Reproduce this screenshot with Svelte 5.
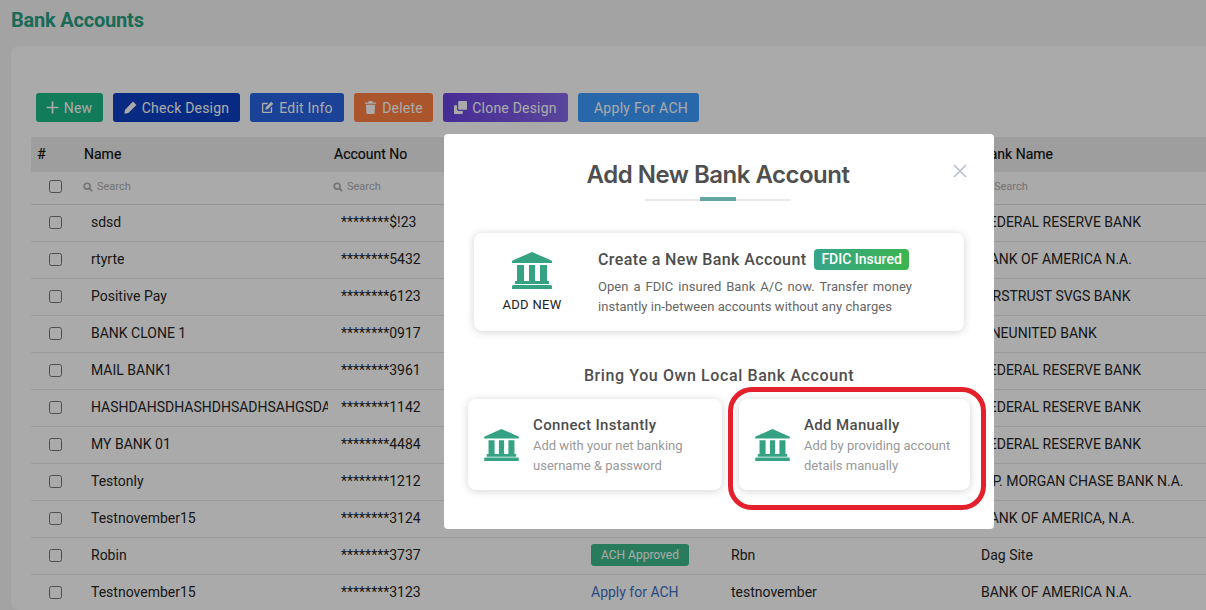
<script>
  const rows = [
    ['sdsd', '********$!23', '', '', 'FEDERAL RESERVE BANK'],
    ['rtyrte', '********5432', '', '', 'BANK OF AMERICA N.A.'],
    ['Positive Pay', '********6123', '', '', 'FIRSTRUST SVGS BANK'],
    ['BANK CLONE 1', '********0917', '', '', 'ONEUNITED BANK'],
    ['MAIL BANK1', '********3961', '', '', 'FEDERAL RESERVE BANK'],
    ['HASHDAHSDHASHDHSADHSAHGSDAHGSD', '********1142', '', '', 'FEDERAL RESERVE BANK'],
    ['MY BANK 01', '********4484', '', '', 'FEDERAL RESERVE BANK'],
    ['Testonly', '********1212', '', '', 'J.P. MORGAN CHASE BANK N.A.'],
    ['Testnovember15', '********3124', '', '', 'BANK OF AMERICA, N.A.'],
    ['Robin', '********3737', 'approved', 'Rbn', 'Dag Site'],
    ['Testnovember15', '********3123', 'apply', 'testnovember', 'BANK OF AMERICA N.A.']
  ];
</script>

{#snippet bank(cls)}
  <svg class={cls} viewBox="0 0 40 37" aria-hidden="true">
    <path d="M20 0 39.500 8.600q.5.3.5.9V11H0V9.500q0-.6.5-.9Z" />
    <path d="M5 13h7v16H5zM17 13h6v16h-6zM28 13h7v16h-7zM3 29h34v3H3zM1.500 33h37a1.500 1.500 0 0 1 1.500 1.500V37H0v-2.500A1.500 1.500 0 0 1 1.500 33Z" />
  </svg>
{/snippet}

{#snippet search()}
  <svg class="search-icon" viewBox="0 0 12 12" aria-hidden="true">
    <circle cx="5" cy="5" r="3.500" />
    <path d="M7.700 7.700 11 11" />
  </svg>
{/snippet}

<div class="page">
  <h1>Bank Accounts</h1>
  <section class="panel">
    <div class="toolbar">
      <button class="btn new">
        <svg viewBox="0 0 12 12" aria-hidden="true"><path d="M5.200 .5h1.600v4.700h4.700v1.600H6.800v4.700H5.200V6.800H.5V5.200h4.700Z" /></svg>
        New
      </button>
      <button class="btn check">
        <svg viewBox="0 0 12 12" aria-hidden="true"><path d="M8.300.5 11.500 3.700 4 11 .3 11.700 1 8Z" /></svg>
        Check Design
      </button>
      <button class="btn edit">
        <svg viewBox="0 0 14 14" aria-hidden="true"><path d="M2.200 2H8L6.500 3.500H2.500v8h8v-4L12 6v5.800A1.200 1.200 0 0 1 10.800 13H2.200A1.200 1.200 0 0 1 1 11.800V3.200A1.200 1.200 0 0 1 2.200 2ZM11 .8 13.200 3 7.300 8.900 4.600 9.400 5.100 6.700Z" /></svg>
        Edit Info
      </button>
      <button class="btn delete">
        <svg viewBox="0 0 12 14" aria-hidden="true"><path d="M4 0h4l.6 1.500H12V3H0V1.500h3.400ZM1 4h10l-.6 9a1 1 0 0 1-1 1H2.600a1 1 0 0 1-1-1Z" /></svg>
        Delete
      </button>
      <button class="btn clone">
        <svg viewBox="0 0 14 14" aria-hidden="true"><path d="M5.500 0h7.500a1 1 0 0 1 1 1v7.500a1 1 0 0 1-1 1H5.500a1 1 0 0 1-1-1V1a1 1 0 0 1 1-1ZM1 4.500h2.300v4.700a1.500 1.500 0 0 0 1.500 1.500h4.700V13a1 1 0 0 1-1 1H1a1 1 0 0 1-1-1V5.500a1 1 0 0 1 1-1Z" /></svg>
        Clone Design
      </button>
      <button class="btn ach">Apply For ACH</button>
    </div>

    <table>
      <colgroup>
        <col class="c0" /><col class="c1" /><col class="c2" /><col class="c3" /><col class="c4" /><col class="c5" />
      </colgroup>
      <thead>
        <tr class="head">
          <th>#</th><th>Name</th><th>Account No</th><th>ACH Status</th><th>Nick Name</th><th>Bank Name</th>
        </tr>
        <tr class="filters">
          <td class="box"><input type="checkbox" /></td>
          <td><span class="sf">{@render search()}Search</span></td>
          <td><span class="sf">{@render search()}Search</span></td>
          <td><span class="sf">{@render search()}Search</span></td>
          <td><span class="sf">{@render search()}Search</span></td>
          <td><span class="sf">{@render search()}Search</span></td>
        </tr>
      </thead>
      <tbody>
        {#each rows as r}
          <tr>
            <td class="box"><input type="checkbox" /></td>
            <td class="pad">{r[0]}</td>
            <td class="pad">{r[1]}</td>
            <td class="status">
              {#if r[2] === 'approved'}<span class="approved">ACH Approved</span>{/if}
              {#if r[2] === 'apply'}<span class="apply">Apply for ACH</span>{/if}
            </td>
            <td class="status">{r[3]}</td>
            <td class="status">{r[4]}</td>
          </tr>
        {/each}
      </tbody>
    </table>
  </section>

  <div class="overlay"></div>

  <div class="modal">
    <h2>Add New Bank Account</h2>
    <svg class="close" viewBox="0 0 14 14" aria-hidden="true"><path d="M1 1l12 12M13 1 1 13" /></svg>
    <div class="rule"><span></span></div>

    <div class="card main">
      <div class="add">
        {@render bank('icon-lg')}
        <span>ADD NEW</span>
      </div>
      <div class="main-text">
        <div class="main-title"><span>Create a New Bank Account</span><span class="badge">FDIC Insured</span></div>
        <p>Open a FDIC insured Bank A/C now. Transfer money instantly in-between accounts without any charges</p>
      </div>
    </div>

    <h3>Bring You Own Local Bank Account</h3>

    <div class="pair">
      <div class="card small left">
        {@render bank('icon-sm')}
        <div class="small-text">
          <div class="small-title">Connect Instantly</div>
          <p>Add with your net banking<br />username &amp; password</p>
        </div>
      </div>
      <div class="card small right">
        {@render bank('icon-sm')}
        <div class="small-text">
          <div class="small-title">Add Manually</div>
          <p>Add by providing account<br />details manually</p>
        </div>
      </div>
    </div>
  </div>

  <div class="marker"></div>
</div>

<style>
  :global(body) {
    margin: 0;
    background: #f5f5f5;
  }
  .page {
    position: relative;
    width: 1206px;
    height: 610px;
    overflow: hidden;
    background: #f5f5f5;
    font-family: Roboto, sans-serif;
    font-size: 14px;
    color: #262626;
  }
  h1 {
    margin: 0;
    padding: 10px 0 0 11px;
    height: 46px;
    box-sizing: border-box;
    font-size: 20px;
    line-height: 21px;
    font-weight: 700;
    letter-spacing: -0.2px;
    color: #28a085;
  }
  .panel {
    width: 1215px;
    margin-left: 11px;
    height: 564px;
    padding: 47px 0 0 20px;
    box-sizing: border-box;
    background: #fff;
    border-radius: 8px;
  }
  .toolbar {
    display: flex;
    gap: 10px;
    padding-left: 5px;
    height: 29px;
    margin-bottom: 15px;
  }
  .btn {
    display: flex;
    align-items: center;
    justify-content: center;
    gap: 5px;
    height: 29px;
    padding: 0;
    border: 0;
    border-radius: 3px;
    color: #fff;
    font: 400 14px/1 Roboto, sans-serif;
    letter-spacing: 0.2px;
  }
  .btn svg {
    width: 13px;
    height: 13px;
    fill: currentColor;
  }
  .new { width: 67px; padding-right: 1px; background: #1bbb87; }
  .check { width: 127px; background: #0c3fc3; }
  .edit { width: 94px; background: #2863e1; }
  .delete { width: 79px; background: #ff8043; }
  .clone { width: 125px; background: linear-gradient(90deg, #6943e1, #8769e8); }
  .ach { width: 121px; padding-left: 5px; background: #3c9dff; letter-spacing: 0.3px; }

  table {
    table-layout: fixed;
    width: 1175px;
    border-collapse: collapse;
  }
  .c0 { width: 47px; }
  .c1 { width: 250px; }
  .c2 { width: 257px; }
  .c3 { width: 140px; }
  .c4 { width: 250px; }
  .c5 { width: 231px; }
  .head {
    height: 35px;
    background: #eee;
  }
  th {
    padding: 0 6px 1px;
    text-align: left;
    font-weight: 400;
    font-size: 14px;
    color: #111;
    -webkit-text-stroke: 0.2px #111;
  }
  .filters {
    height: 32px;
    border-bottom: 1px solid #e0e0e0;
  }
  .filters td {
    padding: 0 5px 2px;
    font-size: 11px;
    color: #aeaeae;
  }
  .sf {
    display: flex;
    align-items: center;
    gap: 4px;
  }
  .search-icon {
    width: 10px;
    height: 10px;
    fill: none;
    stroke: #aeaeae;
    stroke-width: 2;
  }
  tbody tr {
    height: 37px;
    border-bottom: 1px solid #e8e8e8;
  }
  td {
    padding: 0 6px 1px;
    white-space: nowrap;
    overflow: hidden;
  }
  td.pad { padding-left: 13px; }
  td.box,
  .filters td.box {
    padding: 0 0 3px 18px;
  }
  tbody td.box { padding-bottom: 0; }
  input[type='checkbox'] {
    display: block;
    width: 13px;
    height: 13px;
    margin: 0;
    appearance: none;
    border: 1px solid #767676;
    border-radius: 2.500px;
    background: #fff;
  }
  .approved {
    display: inline-block;
    padding: 0 10px;
    height: 22px;
    line-height: 22px;
    font-size: 12px;
    border-radius: 3px;
    background: #3cbb8c;
    color: #fff;
  }
  .apply { color: #3d6fc4; }

  .overlay {
    position: absolute;
    inset: 0;
    background: rgba(0, 0, 0, 0.333);
  }
  .modal {
    position: absolute;
    left: 444px;
    top: 134px;
    width: 550px;
    height: 395px;
    background: #fff;
    border-radius: 4px;
    color: #4d4d4d;
  }
  h2 {
    margin: 0;
    padding: 27px 2px 0 0;
    height: 60px;
    box-sizing: border-box;
    text-align: center;
    font: 600 24px/28px Inter, sans-serif;
    letter-spacing: -0.5px;
    color: #4f4f4f;
  }
  .close {
    position: absolute;
    left: 509px;
    top: 30px;
    width: 14px;
    height: 14px;
    fill: none;
    stroke: #b9bdd0;
    stroke-width: 1.600;
  }
  .rule {
    position: relative;
    width: 146px;
    height: 2px;
    margin: 5px 0 0 201px;
    background: #e9e9e9;
  }
  .rule span {
    position: absolute;
    left: 55px;
    top: -2px;
    width: 36px;
    height: 4px;
    background: #63a6a3;
  }
  .card {
    background: #fff;
    border-radius: 8px;
    box-shadow: 0 1px 9px rgba(0, 0, 0, 0.18);
  }
  .main {
    display: flex;
    width: 490px;
    height: 98px;
    margin: 32px 0 0 30px;
  }
  .add {
    width: 116px;
    padding-top: 19px;
    box-sizing: border-box;
    display: flex;
    flex-direction: column;
    align-items: center;
    gap: 8px;
    font-size: 13px;
    letter-spacing: 0.3px;
    color: #222;
  }
  .add span { line-height: 15px; }
  .icon-lg {
    display: block;
    width: 40px;
    height: 37px;
    fill: #35a283;
  }
  .icon-sm {
    flex: none;
    display: block;
    width: 35px;
    height: 32px;
    fill: #35a283;
  }
  .main-text {
    width: 314px;
    margin-left: 8px;
    padding-top: 16px;
  }
  .main-title {
    display: flex;
    align-items: center;
    gap: 8px;
    height: 21px;
    font-size: 16px;
    font-weight: 500;
    letter-spacing: 0.38px;
    white-space: nowrap;
  }
  .badge {
    display: inline-block;
    height: 21px;
    padding: 0 7px;
    border-radius: 4px;
    line-height: 21px;
    font-size: 14px;
    font-weight: 500;
    letter-spacing: 0;
    color: #fff;
    background: linear-gradient(90deg, #35a48a, #3cb54f);
  }
  .main-text p {
    margin: 7px 0 0;
    font-size: 13px;
    line-height: 20px;
    letter-spacing: 0.05px;
    text-align: justify;
    color: #666;
  }
  h3 {
    margin: 34px 0 0;
    height: 21px;
    text-align: center;
    font-size: 16px;
    line-height: 21px;
    font-weight: 500;
    letter-spacing: 0.6px;
    color: #4f4f4f;
  }
  .pair {
    display: flex;
    gap: 17px;
    margin: 13px 0 0 24px;
  }
  .small {
    display: flex;
    align-items: center;
    gap: 14px;
    height: 91px;
    box-sizing: border-box;
    padding: 0 16px;
  }
  .left { width: 254px; }
  .right { width: 231px; }
  .small-text { padding-top: 2px; }
  .small-title {
    font-size: 15px;
    line-height: 18px;
    font-weight: 500;
    letter-spacing: 0.35px;
  }
  .small p {
    margin: 2px 0 0;
    font-size: 13px;
    line-height: 20px;
    color: #999;
    white-space: nowrap;
  }
  .marker {
    position: absolute;
    left: 728px;
    top: 387px;
    width: 258px;
    height: 123px;
    box-sizing: border-box;
    border: 5px solid #e3202c;
    border-radius: 24px;
  }
</style>
